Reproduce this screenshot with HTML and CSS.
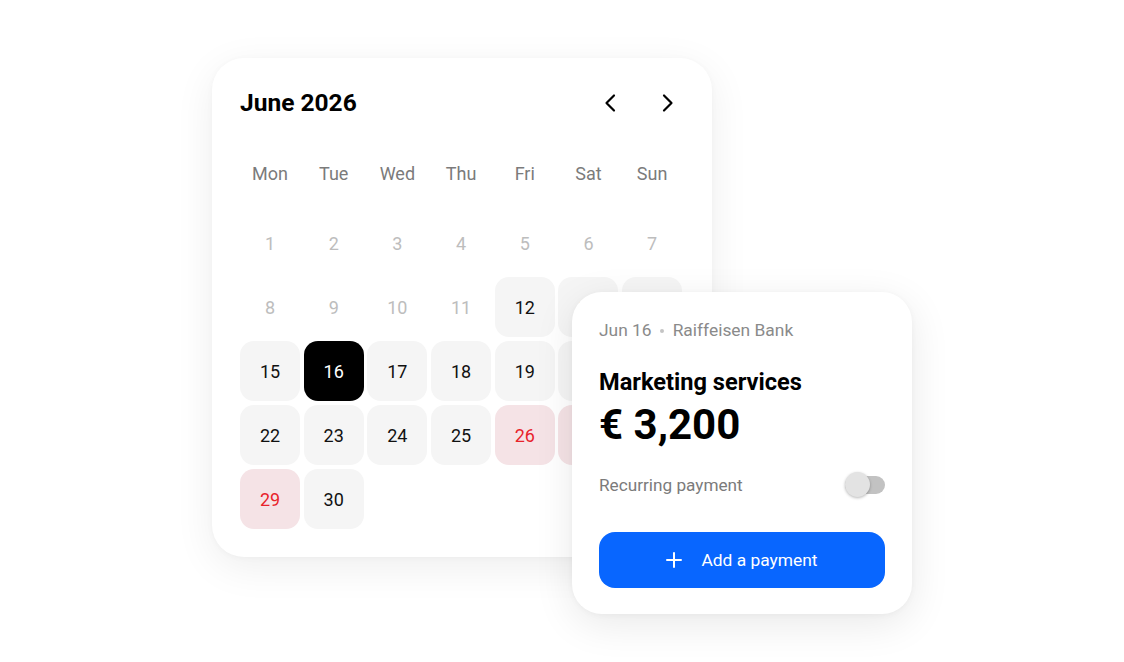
FILE: index.html
```html
<!DOCTYPE html>
<html lang="en">
<head>
<meta charset="utf-8">
<title>Calendar payment</title>
<link rel="stylesheet" href="styles.css">
</head>
<body>
<div class="stage">
  <section class="calendar">
    <header class="cal-head">
      <h1 class="cal-title">June 2026</h1>
      <div class="cal-nav">
        <button class="nav-btn" aria-label="Previous month">
          <svg width="32" height="32" viewBox="0 0 32 32"><path d="M20 8.5 L12.5 16 L20 23.5" fill="none" stroke="#000" stroke-width="2.2" stroke-linecap="round" stroke-linejoin="round"/></svg>
        </button>
        <button class="nav-btn" aria-label="Next month">
          <svg width="32" height="32" viewBox="0 0 32 32"><path d="M12 8.5 L19.5 16 L12 23.5" fill="none" stroke="#000" stroke-width="2.2" stroke-linecap="round" stroke-linejoin="round"/></svg>
        </button>
      </div>
    </header>
    <div class="weekdays">
      <span>Mon</span><span>Tue</span><span>Wed</span><span>Thu</span><span>Fri</span><span>Sat</span><span>Sun</span>
    </div>
    <div class="days">
      <span class="day past">1</span><span class="day past">2</span><span class="day past">3</span><span class="day past">4</span><span class="day past">5</span><span class="day past">6</span><span class="day past">7</span>
      <span class="day past">8</span><span class="day past">9</span><span class="day past">10</span><span class="day past">11</span><span class="day">12</span><span class="day">13</span><span class="day">14</span>
      <span class="day">15</span><span class="day selected">16</span><span class="day">17</span><span class="day">18</span><span class="day">19</span><span class="day">20</span><span class="day">21</span>
      <span class="day">22</span><span class="day">23</span><span class="day">24</span><span class="day">25</span><span class="day due">26</span><span class="day due">27</span><span class="day due">28</span>
      <span class="day due">29</span><span class="day">30</span>
    </div>
  </section>

  <section class="payment">
    <div class="meta"><span>Jun 16</span><span class="dot"></span><span>Raiffeisen Bank</span></div>
    <h2 class="pay-title">Marketing services</h2>
    <div class="amount">€ 3,200</div>
    <div class="recurring">
      <span>Recurring payment</span>
      <span class="toggle"><span class="knob"></span></span>
    </div>
    <button class="add-btn">
      <svg width="16" height="16" viewBox="0 0 16 16"><path d="M8 1 V15 M1 8 H15" stroke="#fff" stroke-width="2" stroke-linecap="round"/></svg>
      <span>Add a payment</span>
    </button>
  </section>
</div>
</body>
</html>
```

FILE: styles.css
```css
* { box-sizing: border-box; }

html, body {
  margin: 0;
  padding: 0;
  background: #ffffff;
  font-family: Roboto, "Liberation Sans", Arial, sans-serif;
  color: #000;
}

.stage {
  display: grid;
  padding: 58px 0 0 212px;
  width: 1124px;
  height: 662px;
  overflow: hidden;
}

.calendar {
  grid-area: 1 / 1;
  align-self: start;
  justify-self: start;
  width: 500px;
  height: 499px;
  padding: 28px 29px 28px 28px;
  background: #fff;
  border-radius: 32px;
  box-shadow: 0 10px 40px rgba(0, 0, 0, 0.07), 0 1px 6px rgba(0, 0, 0, 0.03);
}

.cal-head {
  display: flex;
  align-items: center;
  justify-content: space-between;
  height: 34px;
}

.cal-title {
  margin: 0;
  font-size: 24.5px;
  font-weight: 700;
  line-height: 34px;
}

.cal-nav {
  display: flex;
  gap: 26px;
  margin-right: -1px;
}

.nav-btn {
  width: 32px;
  height: 32px;
  padding: 0;
  border: 0;
  background: none;
  display: flex;
}

.weekdays {
  display: grid;
  grid-template-columns: repeat(7, 60px);
  column-gap: 3.7px;
  margin-top: 33px;
  height: 40px;
  align-items: center;
  font-size: 18px;
  color: #7b7b7b;
  text-align: center;
}

.days {
  display: grid;
  grid-template-columns: repeat(7, 60px);
  grid-auto-rows: 60px;
  column-gap: 3.7px;
  row-gap: 4px;
  margin-top: 20px;
}

.day {
  display: flex;
  align-items: center;
  justify-content: center;
  border-radius: 14px;
  background: #f5f5f5;
  font-size: 18px;
  color: #111;
}

.day.past {
  background: transparent;
  color: #bdbdbd;
}

.day.selected {
  background: #000;
  color: #fff;
}

.day.due {
  background: #f5e3e6;
  color: #e8232b;
}

.payment {
  grid-area: 1 / 1;
  align-self: start;
  justify-self: start;
  margin: 234px 0 0 360px;
  width: 340px;
  height: 322px;
  padding: 28px 27px 26px;
  background: #fff;
  border-radius: 30px;
  box-shadow: 0 10px 40px rgba(0, 0, 0, 0.09), 0 1px 6px rgba(0, 0, 0, 0.04);
  display: flex;
  flex-direction: column;
}

.meta {
  display: flex;
  align-items: center;
  height: 20px;
  font-size: 17.4px;
  color: #8a8a8a;
}

.dot {
  width: 4px;
  height: 4px;
  border-radius: 50%;
  background: #c4c4c4;
  margin: 1px 9px 0 8px;
}

.pay-title {
  margin: 29px 0 0;
  font-size: 23.6px;
  line-height: 26px;
  font-weight: 700;
}

.amount {
  margin-top: 6px;
  font-size: 42px;
  line-height: 48px;
  font-weight: 700;
}

.recurring {
  margin-top: 22px;
  display: flex;
  align-items: center;
  justify-content: space-between;
  height: 28px;
  font-size: 17.2px;
  color: #7b7b7b;
}

.toggle {
  position: relative;
  width: 40px;
  height: 18px;
  border-radius: 9px;
  background: #c2c2c2;
}

.knob {
  position: absolute;
  left: 0;
  top: -4px;
  width: 25px;
  height: 25px;
  border-radius: 50%;
  background: #e3e3e3;
  box-shadow: 0 1px 3px rgba(0, 0, 0, 0.28);
}

.add-btn {
  margin-top: 33px;
  height: 56px;
  border: 0;
  border-radius: 16px;
  background: #0866ff;
  color: #fff;
  font-family: inherit;
  font-size: 17.4px;
  display: flex;
  align-items: center;
  justify-content: center;
  gap: 19px;
  padding: 0;
}
```
